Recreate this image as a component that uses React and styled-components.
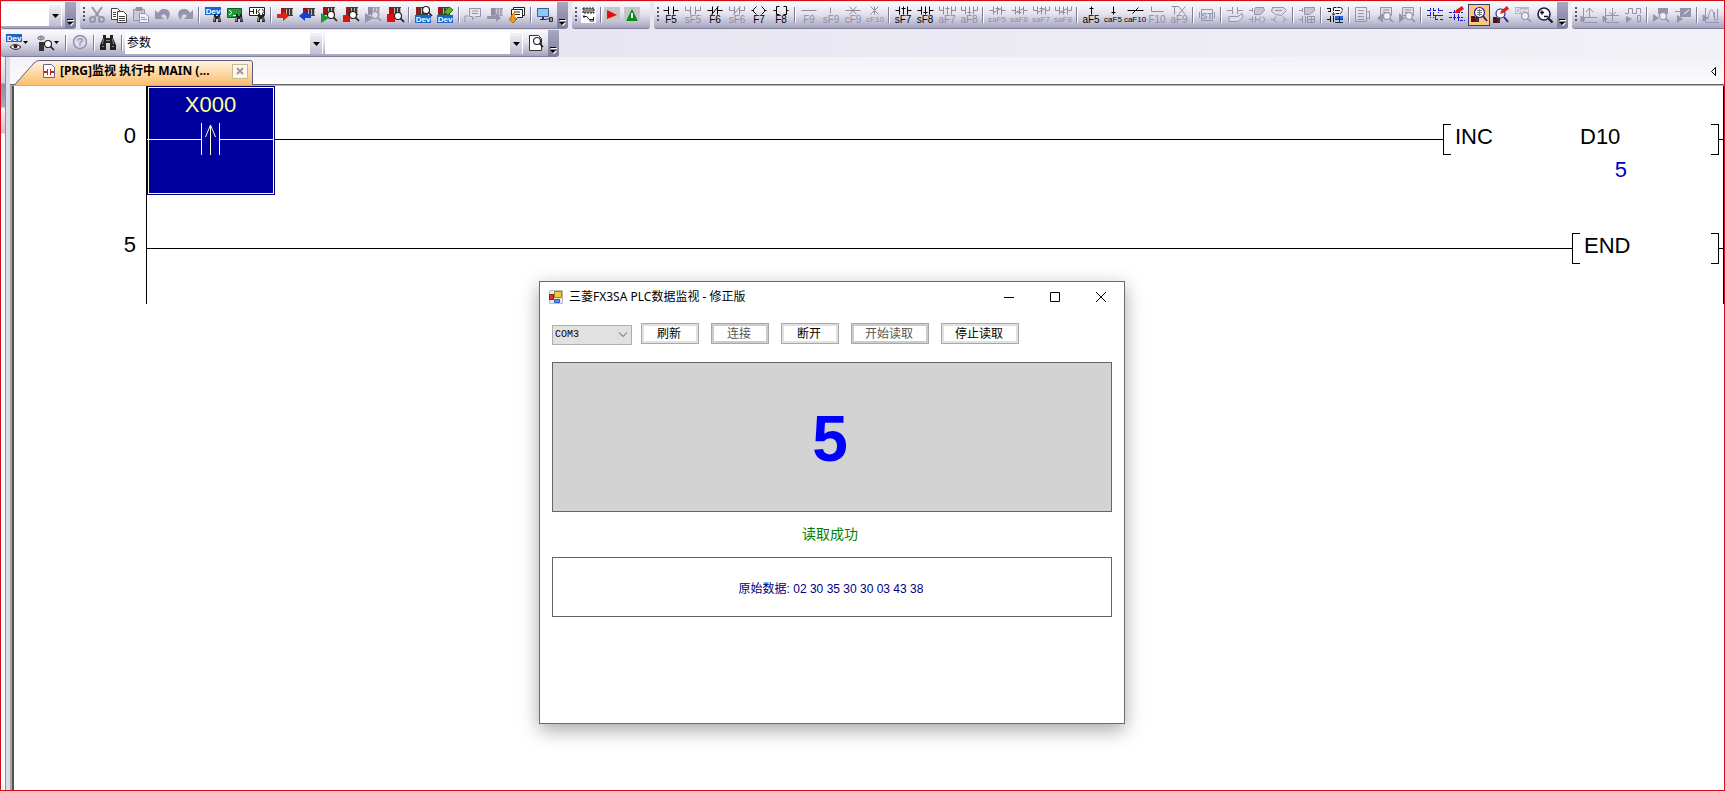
import React, { useState } from 'react'
import styled, { createGlobalStyle, css } from 'styled-components'

const sans = `"Liberation Sans", "Noto Sans CJK SC", sans-serif`
const ui = `"Noto Sans", "Noto Sans CJK SC", sans-serif`

const GlobalStyle = createGlobalStyle`
    * {
        box-sizing: border-box;
    }
    body {
        margin: 0;
        background: #fff;
        font-family: ${sans};
    }
    button, select {
        font-family: inherit;
        margin: 0;
    }
`

const Frame = styled.div`
    position: relative;
    display: flex;
    flex-direction: column;
    min-height: 100vh;
    border: 1px solid #d01018;
    overflow: hidden;
`

/* ---------- toolbars ---------- */

const Toolbars = styled.header`
    display: flex;
    flex-direction: column;
    gap: 1px;
    padding-top: 1px;
    background: linear-gradient(90deg, #e2e1ed, #f2f1f8);
`

const Bar = styled.div`
    display: flex;
    gap: 4px;
    height: 27px;
    overflow: hidden;
`

const Group = styled.div`
    display: flex;
    flex: none;
    align-items: center;
    height: 27px;
    padding-left: ${({ $flush }) => ($flush ? 0 : 1)}px;
    padding-right: ${({ $end }) => $end || 0}px;
    border-bottom: 1px solid #807f9c;
    border-radius: ${({ $flush }) => ($flush ? '0' : '3px')} 0 3px 3px;
    background: linear-gradient(#fbfbfd, #e4e3ee 45%, #c3c2d5 75%, #a5a4be);
    overflow: hidden;
`

const Grip = styled.span`
    width: 5px;
    height: 16px;
    background: repeating-linear-gradient(#55546e 0 2px, transparent 2px 4px) 2px 0 / 2px 100% no-repeat;
`

const Sep = styled.span`
    width: ${({ $tight }) => ($tight ? 2 : 6)}px;
    height: 16px;
    background: linear-gradient(90deg, #7c7b98 1px, #fff 1px) center / 2px 100% no-repeat;
`

const Tool = styled.button`
    display: flex;
    flex-direction: column;
    align-items: center;
    justify-content: center;
    width: ${({ $wide, $slim }) => ($wide ? 31 : $slim ? 20 : 22)}px;
    height: 22px;
    padding: 0;
    border: ${({ $active }) => ($active ? '1px solid #3c3c70' : 'none')};
    background: ${({ $active }) => ($active ? '#fbc681' : 'transparent')};
    color: ${({ $dim }) => ($dim ? '#8d8ca6' : '#000')};
`

const KeyLabel = styled.span`
    font-size: ${({ $long }) => ($long ? 8 : 10)}px;
    line-height: 9px;
    white-space: nowrap;
`

const Overflow = styled.button`
    display: flex;
    align-items: flex-end;
    justify-content: center;
    align-self: stretch;
    width: 11px;
    margin-left: 1px;
    padding: 0 0 2px;
    border: none;
    background: linear-gradient(#a9a8c2, #7f7e9c);
`

const Combo = styled.div`
    position: relative;
    width: ${({ $width }) => $width}px;
    height: 22px;
    margin-right: 2px;
    background: #fff;
`

const ComboSelect = styled.select`
    appearance: none;
    width: 100%;
    height: 22px;
    padding: 0 16px 0 2px;
    border: none;
    background: transparent;
    color: #000;
    font-size: 12px;
    font-family: ${sans};
`

const ComboArrow = styled.span`
    position: absolute;
    top: 1px;
    right: 1px;
    bottom: 0;
    display: flex;
    align-items: center;
    justify-content: center;
    width: 12px;
    background: linear-gradient(#f0f0f6, #bfbed2);
    pointer-events: none;
`

const Svg = styled.svg`
    display: block;
    flex: none;
    overflow: visible;
`

const G = '#9594ae'

const Binoc = ({ x = 0, y = 0, s = 1 }) => (
    <g transform={`translate(${x} ${y}) scale(${s})`}>
        <path d="M1 0h2v2h2V0h2v2l1 6H5V5H3v3H0l1-6z" fill="#222" />
        <path d="M1.500 3v4M6 3v4" stroke="#888" />
    </g>
)

const Mag = ({ x = 6, y = 4, color = '#222', fill = '#fff' }) => (
    <g transform={`translate(${x} ${y})`}>
        <circle cx="4" cy="4" r="3.500" fill={fill} stroke={color} strokeWidth="1.200" />
        <path d="M6.500 6.500l3.500 3.500" stroke={color} strokeWidth="1.700" />
    </g>
)

const Plc = ({ x = 4, y = 1, dim }) => (
    <g transform={`translate(${x} ${y})`}>
        <path d="M0 0h12v8H0z" fill={dim ? '#a3a2b8' : '#3c3c3c'} />
        <path d="M0 0h4v7H0z" fill={dim ? '#8f8ea6' : '#a01414'} />
        <path d="M5.500 1v6M8.500 1v6M11.500 1v6" stroke={dim ? '#cfcedd' : '#b9b4a8'} />
    </g>
)

const DevTag = ({ y = 0 }) => (
    <g>
        <path d={`M0 ${y}h16v8H0z`} fill="#1668cf" />
        <text x="8" y={y + 7} fontSize="8" fontWeight="700" textAnchor="middle" fill="#fff">Dev</text>
    </g>
)

const Note = ({ x = 4, y = 1, color = '#222', fill = '#fff' }) => (
    <g transform={`translate(${x} ${y})`}>
        <path d="M.5.5h11v8h-5l-3 3v-3h-3z" fill={fill} stroke={color} />
        <path d="M3 3h6M3 5.500h6" stroke={color} />
    </g>
)

const Contacts = ({ y = 12, color = '#222' }) => (
    <path d={`M0 ${y}h3M3.500 ${y - 3}v6M6.500 ${y - 3}v6M7 ${y}h3M12 ${y - 3}l-2 3 2 3M14 ${y - 3}l2 3-2 3`} fill="none" stroke={color} />
)

const icons = {
    cut: <g fill="none" stroke={G} strokeWidth="2"><path d="M3 0l7 10M13 0L6 10" /><circle cx="3.500" cy="12.500" r="2.500" /><circle cx="12.500" cy="12.500" r="2.500" /></g>,
    copy: <g fill="#fff" stroke="#444"><path d="M.5 1.500h6l3 3v8h-9z" /><path d="M6.500 4.500h6l3 3v8h-9z" /><path d="M2 5.500h3M2 7.500h3M2 9.500h3M8 9.500h6M8 11.500h6M8 13.500h6" /></g>,
    paste: <g stroke={G}><path d="M.5 2.500h11v11h-11z" fill="#c9c8d8" /><path d="M3 .5h6v3H3z" fill={G} /><path d="M6.500 6.500h6l3 3v6h-9z" fill="#f0f0f6" /><path d="M8 10.500h4M8 12.500h6" /></g>,
    undo: <path d="M0 3v9h9L6 9c3-3 6-1 6 4 5-5 3-12-4-11-2 0-4 2-5 4z" fill={G} />,
    redo: <path d="M16 3v9H7l3-3c-3-3-6-1-6 4-5-5-3-12 4-11 2 0 4 2 5 4z" fill={G} />,
    devFind: <g><DevTag /><Binoc x={8} y={7} /></g>,
    cmdFind: <g><path d="M.5 1.500h14v9H.5z" fill="#1f9a3a" stroke="#145c24" /><path d="M2 3l3 2.500L2 8M6 8.500h3" fill="none" stroke="#fff" /><Binoc x={8} y={7} /></g>,
    ldFind: <g><path d="M.5.5h15v8H.5z" fill="#fff" stroke="#222" /><path d="M1 4.500h3M4.500 2v5M7.500 2v5M11 2L9 4.500 11 7M13 2l2 2.500L13 7" fill="none" stroke="#222" /><Binoc x={8} y={7} /></g>,
    plcWrite: <g><Plc /><path d="M0 7h6V4l6 5-6 5v-3H0z" fill="#e02412" /></g>,
    plcRead: <g><Plc /><path d="M12 7H6V4L0 9l6 5v-3h6z" fill="#1540d8" /></g>,
    monStart: <g><Plc x={2} y={0} /><path d="M0 6l8 5-8 5z" fill="#1c9a2c" /><Mag /></g>,
    monStop: <g><Plc x={3} y={0} /><path d="M0 8h7v7H0z" fill="#e01010" /><Mag /></g>,
    monDim: <g><Plc x={3} y={0} dim /><path d="M0 6l8 5-8 5z" fill={G} /><Mag color={G} fill="#dddce8" /></g>,
    monEnd: <g><Plc x={2} y={0} /><path d="M0 7h8v8H0z" fill="#e01010" /><Mag x={7} y={5} /></g>,
    devMon: <g><Plc x={1} y={0} /><Mag x={7} y={-1} /><DevTag y={8} /></g>,
    devEdit: <g><Plc x={1} y={0} /><path d="M7 5l5-5 4 3-5 5z" fill="#58b81e" stroke="#2a6a10" /><DevTag y={8} /></g>,
    noteDim: <g><Note color={G} fill="#e6e5ee" /><path d="M0 15V9h3" fill="none" stroke={G} /></g>,
    plcDim: <g><Plc dim /><path d="M0 9h9V6l5 5-5 4v-3H0z" fill={G} /></g>,
    noteGo: <g><Note x={4} y={0} /><Note x={2} y={2} /><path d="M6 5L2 9v3H0l4 4 4-4H6v-2" fill="#f49a18" stroke="#b86808" /></g>,
    pc: <g><path d="M.5 1.500h11v8H.5z" fill="#8ccaf4" stroke="#3a5a90" /><path d="M5 10h2v2h2v1H3v-1h2z" fill="#333" /><path d="M12.500 10.500h3v4h-3zM9 12h3" fill="#999" stroke="#333" /></g>,
    ladder: <g><path d="M0 0h15v16H0z" fill="#fff" /><path d="M2 1h11v5H2z" fill="#8a8a8a" stroke="#222" strokeDasharray="2 1" /><path d="M2 9.500h4l2 3h4M3 8v3M12.500 10v4h-4" fill="none" stroke="#222" /></g>,
    play: <g><path d="M0 0h16v15H0z" fill="#c6c5c9" /><path d="M3 3l10 5-10 4z" fill="#e80c0c" /></g>,
    warn: <g><path d="M0 0h16v15H0z" fill="#c6c5c9" /><path d="M8 2l6 12H2z" fill="#0e8a1a" /><path d="M8 6v5" stroke="#fff" strokeWidth="2" /></g>,
    st: <g fill="none" stroke={G}><path d="M2.500 2.500h11v11h-11zM.5 5v6M15.500 5v6" /><text x="8" y="12" fontSize="9" fontWeight="700" textAnchor="middle" fill={G} stroke="none">ST</text></g>,
    contactEdit: <g><path d="M0 3.500h5M5.500 0v7M10.500 0v7M11 3.500h5" stroke={G} /><path d="M2 9.500h9l4-3 1 4-5 4H2z" fill="#dddce8" stroke={G} /></g>,
    noteContact: <g><path d="M0 3.500h4M3.500 1v4" stroke={G} /><path d="M5.500 2.500l1-2h8l1 3-4 4h-6z" fill="#c6c5d6" stroke={G} /><Contacts color={G} y={12.5} /></g>,
    noteCoil: <g><path d="M1.500.5h11l3 3-5 5-6-1-4-3z" fill="#dddce8" stroke={G} /><path d="M4 3.500h7M0 12.500h3l2-3M3 12.500l2 3M12 9.500l2 3-2 3M14 12.500h2" fill="none" stroke={G} /></g>,
    noteTable: <g><path d="M0 3.500h4M3.500 1v4" stroke={G} /><path d="M5.500.5h10v3l-5 4h-5z" fill="#c6c5d6" stroke={G} /><path d="M0 12.500h3M3.500 9v7M6.500 9v7M8.500 9.500h7v6h-7zM8 12.500h8M12.500 9v7" fill="none" stroke={G} /></g>,
    noteTableOn: <g><path d="M0 1.500h4M1 4.500h3M3.500 1v4" fill="none" stroke="#111" /><path d="M6.500.5h8l1 3-2 3h-5l-3 2 1-3z" fill="#fff" stroke="#111" strokeDasharray="3 1" /><path d="M8 3.500h5M0 12.500h3M3.500 9v6M6.500 9v6" stroke="#111" /><path d="M8 9h8v3H8z" fill="#2a62d8" /><path d="M8 12.500h8M8 15.500h8M12.500 9v7" stroke="#134" /></g>,
    listDim: <g fill="none" stroke={G}><path d="M.5.5h11v14H.5z" /><path d="M3 3.500h6M3 6.500h6M3 9.500h6M3 12.500h6M11 4.500h3.500v7H12" /></g>,
    findPrev: <g><Note x={3} y={0} color={G} fill="#dddce8" /><path d="M6 6l-6 5 6 5z" fill={G} /><Mag x={6} y={5} color={G} fill="#eee" /></g>,
    findNext: <g><Note x={3} y={0} color={G} fill="#dddce8" /><path d="M0 6l6 5-6 5z" fill={G} /><Mag x={6} y={5} color={G} fill="#eee" /></g>,
    tree: <g fill="none" stroke="#1c1ccc"><path d="M0 3.500h3M6 3.500h3M12 3.500h4M0 8.500h3M6 8.500h10M8.500 8v5M8 12.500h3M13 12.500h3" /><path d="M3.500 1v5M6.500 1v5M11.500 1v5M3.500 6v5M6.500 6v5" strokeDasharray="3 1" /></g>,
    treeEdit: <g><path d="M0 5.500h14M0 10.500h14M5.500 3v10M9.500 3v11M11 13.500h5" fill="none" stroke="#1c1ccc" strokeDasharray="3 1" /><path d="M6 6l1-3 6-4 2 3-6 4z" fill="#e01c10" /></g>,
    monOn: <g><path d="M0 9h4v6H0z" fill="#5c1010" /><path d="M4 10h4v5H4z" fill="#333" /><circle cx="8.500" cy="5.500" r="5" fill="#fff" stroke="#24248c" strokeWidth="1.200" /><path d="M12 9l4 5" stroke="#24248c" strokeWidth="2" /><path d="M6 3.500h5M6 5.500h5M6 7.500h5M8.500 2v7" stroke="#777" /></g>,
    monEdit: <g><path d="M0 10h4v6H0z" fill="#5c1010" /><path d="M4 11h3v5H4z" fill="#333" /><circle cx="7.500" cy="6.500" r="4.500" fill="#fff" stroke="#24248c" strokeWidth="1.200" /><path d="M11 10l4 5" stroke="#24248c" strokeWidth="2" /><path d="M7 7l1-3 6-5 2 3-6 4z" fill="#e01c10" /></g>,
    devDim: <g><path d="M0 0h14v7H0z" fill="#b5b4c8" /><text x="7" y="6" fontSize="7" fontWeight="700" textAnchor="middle" fill="#f0f0f6">Dev</text><Mag x={6} y={5} color={G} fill="#eee" /></g>,
    zoom: <g><circle cx="7" cy="7" r="6" fill="#fff" stroke="#1a1a50" strokeWidth="1.600" /><path d="M3 5.500h4M5 3.500v4M7 9.500h4" stroke="#111" strokeWidth="1.500" /><path d="M11.500 11.500l4 4" stroke="#222" strokeWidth="2.400" /></g>,
    scopeA: <g fill="none" stroke={G}><path d="M2.500 1v14.500H16M2 10.500h14M8.500 1v9M5 5l3.500-4L12 5" /><path d="M0 9l4 3-4 3z" fill={G} /></g>,
    scopeB: <g fill="none" stroke={G}><path d="M2.500 1v14.500H16M2 8.500h14M9.500 1v13M6 5l3.500 3L13 5" /><path d="M0 9l4 3-4 3z" fill={G} /></g>,
    pulse: <g fill="none" stroke={G}><path d="M0 6.500h3.500v-5h4v5h4v-5h4v5M12.500 8.500h3v6h-3z" /><path d="M1 9l6 3-6 4z" fill={G} stroke="none" /></g>,
    camFind: <g><path d="M5 1h10v6H5z" fill={G} /><path d="M0 7l6 4-6 4z" fill={G} /><Mag x={6} y={5} color={G} fill="#eee" /></g>,
    camPc: <g><path d="M5 1h11v9H5z" fill={G} /><path d="M9 7l5-4" stroke="#fff" /><path d="M0 4.500h5" stroke={G} /><path d="M2 8l6 4-6 4z" fill={G} /></g>,
    chart: <g fill="none" stroke={G}><path d="M2.500 1v14.500H16M5 12c2-12 5-12 6-2M11.500 5v8h3V2" /><path d="M0 8l5 3-5 3z" fill={G} /></g>,
    help: <g><circle cx="8" cy="7" r="6.500" fill="#dddce8" stroke={G} strokeWidth="1.500" /><text x="8" y="11" fontSize="11" fontWeight="700" textAnchor="middle" fill={G}>?</text></g>,
    binoc: <g><path d="M3 0h3v3h4V0h3v3l3 7v5h-6V8H6v7H0v-5l3-7z" fill="#222" /><path d="M3.500 4L2.500 9M12.500 4l1 5M2 11.500h2M12 11.500h2M6 5.500h4" fill="none" stroke="#8c8c8c" /></g>,
    page: <g><path d="M1.500.5h9l3 3v12h-12z" fill="#fff" stroke="#333" /><Mag x={5} y={2} /></g>,
    devEye: <g transform="translate(-3 0)"><DevTag y={-1} /><path d="M4 12q5-5 11 0-5 5-11 0z" fill="#fff" stroke="#222" /><circle cx="9.500" cy="11.500" r="2" fill="#5a1a10" /><path d="M17 6h5l-2.500 3z" fill="#000" /></g>,
    blockFind: <g transform="translate(-3 0)"><path d="M0 3h8M4 0v6M1.500 1.500h5v3h-5z" fill="none" stroke="#888" /><path d="M2 7h5v9H2z" fill="#333" /><Mag x={7} y={5} /><path d="M17 6h5l-2.500 3z" fill="#000" /></g>,
}

const Icon = ({ name }) => (
    <Svg width="16" height="16" viewBox="0 0 16 16" fontFamily="Liberation Sans, sans-serif" aria-hidden="true">
        {icons[name]}
    </Svg>
)

const contact = 'M1 4H5M5 0V8M13 0V8M13 4H17'
const branch = 'M1 0V4H5M5 0V8M13 0V8M13 4H17V0'
const up = 'M9 0V8M7 2H11'
const down = 'M9 0V8M7 6H11'

const symbols = {
    F5: 'M1 4H6M6 0V8M11 0V8M11 4H16',
    sF5: 'M1 0V4H6M6 0V8M11 0V8M11 4H16V0',
    F6: 'M1 4H6M6 0V8M11 0V8M11 4H16M5 8L12 0',
    sF6: 'M1 0V4H6M6 0V8M11 0V8M11 4H16V0M5 8L12 0',
    F7: 'M1 4H3M6 0L3 3V5L6 8M11 0L14 3V5L11 8M14 4H16',
    F8: 'M1 4H4M7 0H4V8H7M11 0H14V8H11M14 4H16',
    F9: 'M1 4H16',
    sF9: 'M8 1V7',
    cF9: 'M1 4H16M5 0L12 8M12 0L5 8',
    cF10: 'M4 0L12 8M12 0L4 8M8 0V8',
    sF7: contact + up,
    sF8: contact + down,
    aF7: branch + up,
    aF8: branch + down,
    saF5: contact + up + 'M5 6L13 2',
    saF6: contact + down + 'M5 6L13 2',
    saF7: branch + up + 'M5 6L13 2',
    saF8: branch + down + 'M5 6L13 2',
    aF5: 'M9 0V8M7 2H11',
    caF5: 'M9 0V8M7 6H11',
    caF10: 'M1 4H17M6 7L12 1',
    F10: 'M3 0V5H15',
    aF9: 'M1 0H8M4 0V8M8 0L15 8M15 0L8 8',
}

const dimKeys = ['sF5', 'sF6', 'F9', 'sF9', 'cF9', 'cF10', 'aF7', 'aF8', 'saF5', 'saF6', 'saF7', 'saF8', 'F10', 'aF9']

const KeyTool = ({ name }) => (
    <Tool $dim={dimKeys.includes(name)}>
        <Svg width="18" height="9" viewBox="0 0 18 9" aria-hidden="true">
            <path d={symbols[name]} transform="translate(.5 .5)" fill="none" stroke="currentColor" />
        </Svg>
        <KeyLabel $long={name.length > 3}>{name}</KeyLabel>
    </Tool>
)

// "|" is a separator, a name from the symbols table is a ladder key
const Tools = ({ items, slim }) =>
    items.split(' ').map((name, i) => {
        if (name === '|') return <Sep key={i} $tight={slim} />
        if (symbols[name]) return <KeyTool key={i} name={name} />
        return (
            <Tool key={i} aria-label={name} $slim={slim && name !== 'ladder'} $active={name === 'monOn'}>
                <Icon name={name} />
            </Tool>
        )
    })

const More = () => (
    <Overflow aria-label="more">
        <Svg width="7" height="8" viewBox="0 0 7 8">
            <path d="M1 2h6v1H1zM1 5h6L4 8z" fill="#fff" />
            <path d="M0 1h6v1H0zM0 4h6L3 7z" fill="#000" />
        </Svg>
    </Overflow>
)

const ComboBox = ({ label, width, options = [''] }) => (
    <Combo $width={width}>
        <ComboSelect aria-label={label}>
            {options.map((o) => <option key={o}>{o}</option>)}
        </ComboSelect>
        <ComboArrow>
            <Svg width="7" height="4" viewBox="0 0 7 4"><path d="M0 0h7L3.500 4z" /></Svg>
        </ComboArrow>
    </Combo>
)

/* ---------- document area ---------- */

const Workspace = styled.div`
    display: flex;
    flex: 1;
`

const Dock = styled.div`
    width: 9px;
    background:
        linear-gradient(#f4f3f9, #d2d1e0 26px, #8f8eac 27px, #a9a8c2 50px, #fbeef2 51px, #e4b8c4 76px, #fbfafd 77px) 0 0 / 4px 100% no-repeat,
        linear-gradient(90deg, #8c8bad 1px, #dddcea 1px) 4px 0 / 5px 100% no-repeat;
`

const Document = styled.main`
    display: flex;
    flex: 1;
    flex-direction: column;
    min-width: 0;
`

const TabStrip = styled.div`
    display: flex;
    align-items: flex-end;
    justify-content: space-between;
    height: 28px;
    border-bottom: 1px solid #6a6560;
    background: linear-gradient(#f2f2f7, #fcfcfd);
`

const Tab = styled.div`
    position: relative;
    display: flex;
    align-items: center;
    gap: 4px;
    width: 240px;
    height: 25px;
    padding: 0 6px 3px 28px;
    margin-left: 4px;
    margin-bottom: -1px;
`

const TabShape = styled(Svg)`
    position: absolute;
    inset: 0;
`

const TabTitle = styled.span`
    position: relative;
    flex: 1;
    font: bold 12px/16px ${ui};
    white-space: nowrap;
`

const TabIcon = styled(Svg)`
    position: relative;
`

const TabClose = styled.button`
    position: relative;
    display: flex;
    align-items: center;
    justify-content: center;
    width: 16px;
    height: 15px;
    padding: 0;
    border: 1px solid #c9b79a;
    background: #fdf8ec;
`

const Scroll = styled.button`
    display: flex;
    align-items: center;
    height: 26px;
    padding: 0 8px 0 0;
    border: none;
    background: none;
`

const Ladder = styled.section`
    flex: 1;
    border-top: 1px solid #b9b4ae;
    border-left: 4px ridge #a8a49e;
    background: #fff;
`

const Rung = styled.div`
    display: flex;
    align-items: center;
    height: 109px;
    padding-bottom: 2px;
    font-size: 22px;
    line-height: 25px;
`

const Step = styled.span`
    width: 132px;
    padding: 0 10px 8px 0;
    text-align: right;
`

const Rail = styled.div`
    display: flex;
    flex: 1;
    align-items: center;
    height: 109px;
    margin-bottom: -2px;
    padding-bottom: 2px;
    border-left: 1px solid #000;
    border-right: 1px solid #000;
`

const Wire = styled.span`
    flex: ${({ $stub }) => ($stub ? '0 0 4px' : 1)};
    height: 1px;
    background: #000;
`

const Cell = styled.div`
    display: flex;
    flex-direction: column;
    align-items: center;
    width: 128px;
    height: 109px;
    margin-bottom: -2px;
    padding-top: 5px;
    border: 1px solid #00007c;
    border-left: none;
    outline: 1px solid #ffffe0;
    outline-offset: -2px;
    background: #00009f;
    color: #ffff9c;
`

const Instruction = styled.div`
    display: flex;
    width: ${({ $width }) => $width}px;
    height: 31px;
`

const Bracket = styled.span`
    width: 8px;
    height: 31px;
    border: 1px solid #000;
    ${({ $right }) => ($right ? css`border-left: none;` : css`border-right: none;`)}
`

const Mnemonic = styled.span`
    flex: 1;
    padding-left: 4px;
`

const Operand = styled.div`
    display: flex;
    flex-direction: column;
    gap: 8px;
    width: 47px;
    margin-right: 84px;
`

const Value = styled.span`
    color: #0000c8;
    text-align: right;
`

/* ---------- monitor window ---------- */

const Window = styled.section`
    position: absolute;
    top: 280px;
    left: 538px;
    width: 586px;
    height: 443px;
    border: 1px solid #6b6b6b;
    background: #fff;
    box-shadow: 0 6px 18px rgba(0, 0, 0, 0.35);
`

const TitleBar = styled.div`
    display: flex;
    align-items: center;
    height: 29px;
    padding-left: 9px;
`

const Title = styled.h1`
    flex: 1;
    margin: 0 0 0 6px;
    font: 12px/16px ${ui};
`

const WinButton = styled.button`
    display: flex;
    align-items: center;
    justify-content: center;
    width: 46px;
    height: 28px;
    padding: 0;
    border: none;
    background: none;
`

const Content = styled.div`
    display: flex;
    flex-direction: column;
    padding: 12px;
`

const Controls = styled.div`
    display: flex;
    gap: 12px;
    height: 21px;
`

const Port = styled.div`
    position: relative;
    width: 80px;
    margin-right: -3px;
`

const PortSelect = styled.select`
    appearance: none;
    width: 80px;
    height: 20px;
    margin-top: 1px;
    padding: 0 2px;
    border: 1px solid #adadad;
    border-radius: 0;
    background: #e1e1e1;
    color: #000;
    font: 10px/16px "Liberation Mono", monospace;
`

const PortArrow = styled(Svg)`
    position: absolute;
    top: 9px;
    right: 5px;
    pointer-events: none;
`

const Button = styled.button`
    width: ${({ $wide }) => ($wide ? 78 : 58)}px;
    padding: 0 2px 0 0;
    border: 1px solid #a8a8a8;
    box-shadow: inset 0 0 0 2px ${({ disabled }) => (disabled ? '#cccccc' : '#e1e1e1')};
    background: #fff;
    color: ${({ disabled }) => (disabled ? '#555' : '#000')};
    font-size: 12px;
    line-height: 16px;
`

const Display = styled.output`
    display: flex;
    align-items: center;
    justify-content: center;
    height: 150px;
    margin-top: 18px;
    padding: 3px 4px 0 0;
    border: 1px solid #646464;
    background: #d3d3d3;
    color: #0000ff;
    font-size: 64px;
    font-weight: 700;
`

const Status = styled.p`
    margin: 12px 0 13px;
    padding-right: 4px;
    color: #008000;
    font-size: 14px;
    line-height: 20px;
    text-align: center;
`

const RawData = styled.div`
    display: flex;
    align-items: center;
    justify-content: center;
    height: 60px;
    padding-right: 2px;
    border: 1px solid #646464;
    color: #000080;
    font-size: 12px;
`

const MonitorWindow = () => {
    const [port, setPort] = useState('COM3')

    return (
        <Window>
            <TitleBar>
                <Svg width="14" height="14" viewBox="0 0 14 14">
                    <path d="M.5.5h13v13H.5z" fill="#e6ebf2" stroke="#b8bfca" />
                    <path d="M5.500 1.500h7v6h-7z" fill="#f6c92c" stroke="#a8820c" />
                    <path d="M.5 4.500h4v5h-4z" fill="#d83a2c" stroke="#8c1810" />
                    <path d="M5.500 9.500h5v3h-5z" fill="#5c94ee" stroke="#2c5cb8" />
                </Svg>
                <Title>三菱FX3SA PLC数据监视 - 修正版</Title>
                <WinButton aria-label="minimize">
                    <Svg width="10" height="10" viewBox="0 0 10 10"><path d="M0 5.500h10" stroke="#000" /></Svg>
                </WinButton>
                <WinButton aria-label="maximize">
                    <Svg width="10" height="10" viewBox="0 0 10 10"><path d="M.5.5h9v9h-9z" fill="none" stroke="#000" /></Svg>
                </WinButton>
                <WinButton aria-label="close">
                    <Svg width="10" height="10" viewBox="0 0 10 10"><path d="M0 0l10 10M10 0L0 10" stroke="#000" /></Svg>
                </WinButton>
            </TitleBar>
            <Content>
                <Controls>
                    <Port>
                        <PortSelect aria-label="port" value={port} onChange={(e) => setPort(e.target.value)}>
                            <option>COM3</option>
                        </PortSelect>
                        <PortArrow width="8" height="5" viewBox="0 0 8 5">
                            <path d="M0 .5l4 4 4-4" fill="none" stroke="#555" />
                        </PortArrow>
                    </Port>
                    <Button>刷新</Button>
                    <Button disabled>连接</Button>
                    <Button>断开</Button>
                    <Button $wide disabled>开始读取</Button>
                    <Button $wide>停止读取</Button>
                </Controls>
                <Display>5</Display>
                <Status>读取成功</Status>
                <RawData>原始数据: 02 30 35 30 30 03 43 38</RawData>
            </Content>
        </Window>
    )
}

const App = () => {
    return (
        <Frame>
            <GlobalStyle />
            <Toolbars>
                <Bar>
                    <Group $flush>
                        <ComboBox label="zoom" width={61} />
                        <More />
                    </Group>
                    <Group>
                        <Grip />
                        <Tools items="cut copy paste undo redo | devFind cmdFind ldFind | plcWrite plcRead monStart monStop monDim monEnd | devMon devEdit | noteDim plcDim noteGo | pc" />
                        <More />
                    </Group>
                    <Group $end={8}>
                        <Grip />
                        <Tools slim items="ladder | play warn" />
                    </Group>
                    <Group>
                        <Grip />
                        <Tools items="F5 sF5 F6 sF6 F7 F8 | F9 sF9 cF9 cF10 | sF7 sF8 aF7 aF8 | saF5 saF6 saF7 saF8 | aF5 caF5 caF10 F10 aF9 | st | contactEdit noteContact noteCoil | noteTable | noteTableOn | listDim findPrev findNext | tree treeEdit monOn monEdit devDim zoom" />
                        <More />
                    </Group>
                    <Group $end={20}>
                        <Grip />
                        <Tools items="scopeA scopeB pulse | camFind camPc | chart" />
                    </Group>
                </Bar>
                <Bar>
                    <Group $flush>
                        <Tool $wide aria-label="device display"><Icon name="devEye" /></Tool>
                        <Tool $wide aria-label="block search"><Icon name="blockFind" /></Tool>
                        <Tools items="| help | binoc |" />
                        <ComboBox label="search target" width={198} options={['参数']} />
                        <ComboBox label="search text" width={198} />
                        <Tools items="page" />
                        <More />
                    </Group>
                </Bar>
            </Toolbars>
            <Workspace>
                <Dock />
                <Document>
                    <TabStrip>
                        <Tab>
                            <TabShape width="240" height="25" viewBox="0 0 240 25">
                                <defs>
                                    <linearGradient id="tab" x1="0" y1="0" x2="0" y2="1">
                                        <stop offset="0" stopColor="#fff3e0" />
                                        <stop offset="1" stopColor="#fbbd6c" />
                                    </linearGradient>
                                </defs>
                                <path d="M.5 25L20 3Q22 .5 26 .5H236Q238.500.5 238.500 3V25" fill="url(#tab)" stroke="#5c5c84" />
                            </TabShape>
                            <TabIcon width="14" height="14" viewBox="0 0 14 14">
                                <path d="M1.500.5h8l3 3v10h-11z" fill="#fff" stroke="#666a88" />
                                <path d="M2 8h3M9 8h3" stroke="#d01c1c" strokeWidth="2" />
                                <path d="M5.500 5v6M8.500 5v6" stroke="#d01c1c" />
                            </TabIcon>
                            <TabTitle>[PRG]监视 执行中 MAIN (...</TabTitle>
                            <TabClose aria-label="close tab">
                                <Svg width="8" height="8" viewBox="0 0 8 8"><path d="M1 1l6 6M7 1L1 7" stroke="#a09c94" strokeWidth="2" /></Svg>
                            </TabClose>
                        </Tab>
                        <Scroll aria-label="previous tab">
                            <Svg width="5" height="9" viewBox="0 0 5 9"><path d="M4.500.5v8l-4-4z" fill="none" stroke="#000" /></Svg>
                        </Scroll>
                    </TabStrip>
                    <Ladder>
                        <Rung>
                            <Step>0</Step>
                            <Rail>
                                <Cell>
                                    <span>X000</span>
                                    <Svg width="127" height="33" viewBox="0 0 127 33">
                                        <path d="M0 22.500H54.500M54.500 6V38M72.500 6V38M72.500 22.500H127M63.500 8V38M58.500 20L63.500 8L68.500 20" fill="none" stroke="#ffffd0" />
                                    </Svg>
                                </Cell>
                                <Wire />
                                <Instruction $width={276}>
                                    <Bracket />
                                    <Mnemonic>INC</Mnemonic>
                                    <Operand>
                                        <span>D10</span>
                                        <Value>5</Value>
                                    </Operand>
                                    <Bracket $right />
                                </Instruction>
                                <Wire $stub />
                            </Rail>
                        </Rung>
                        <Rung>
                            <Step>5</Step>
                            <Rail>
                                <Wire />
                                <Instruction $width={147}>
                                    <Bracket />
                                    <Mnemonic>END</Mnemonic>
                                    <Bracket $right />
                                </Instruction>
                                <Wire $stub />
                            </Rail>
                        </Rung>
                    </Ladder>
                </Document>
            </Workspace>
            <MonitorWindow />
        </Frame>
    )
}

export default App
